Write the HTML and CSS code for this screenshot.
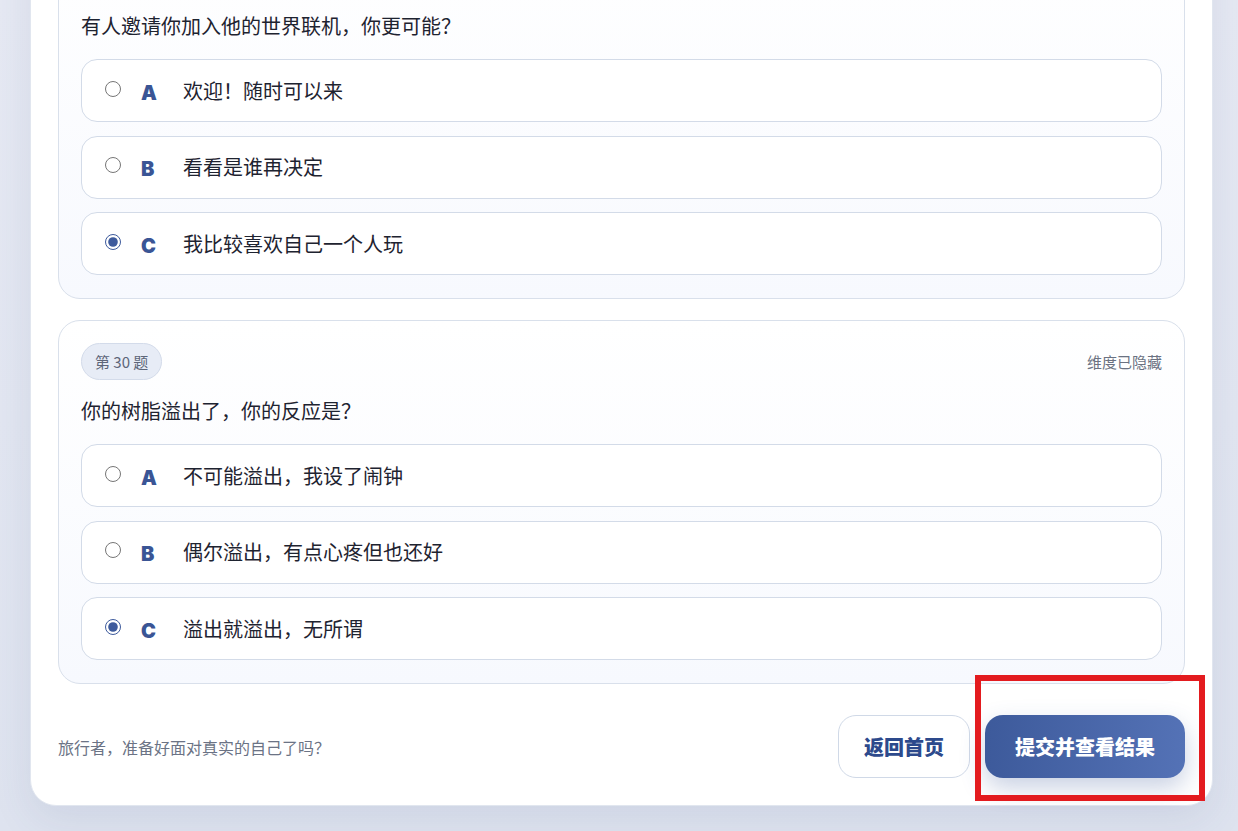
FILE: index.html
```html
<!DOCTYPE html>
<html lang="zh-CN">
<head>
<meta charset="utf-8">
<title>测验</title>
<link rel="stylesheet" href="styles.css">
</head>
<body>
<main class="panel">
  <section class="qcard qcard-cut">
    <p class="qtext">有人邀请你加入他的世界联机，你更可能？</p>
    <div class="options">
      <label class="opt"><input type="radio" name="q29"><span class="letter">A</span><span class="otext">欢迎！随时可以来</span></label>
      <label class="opt"><input type="radio" name="q29"><span class="letter">B</span><span class="otext">看看是谁再决定</span></label>
      <label class="opt"><input type="radio" name="q29" checked><span class="letter">C</span><span class="otext">我比较喜欢自己一个人玩</span></label>
    </div>
  </section>
  <section class="qcard">
    <div class="qhead">
      <span class="badge">第 30 题</span>
      <span class="dim">维度已隐藏</span>
    </div>
    <p class="qtext">你的树脂溢出了，你的反应是？</p>
    <div class="options">
      <label class="opt"><input type="radio" name="q30"><span class="letter">A</span><span class="otext">不可能溢出，我设了闹钟</span></label>
      <label class="opt"><input type="radio" name="q30"><span class="letter">B</span><span class="otext">偶尔溢出，有点心疼但也还好</span></label>
      <label class="opt"><input type="radio" name="q30" checked><span class="letter">C</span><span class="otext">溢出就溢出，无所谓</span></label>
    </div>
  </section>
  <footer class="foot">
    <p class="hint">旅行者，准备好面对真实的自己了吗？</p>
    <div class="actions">
      <button class="btn btn-ghost" type="button">返回首页</button>
      <div class="submit-wrap">
        <button class="btn btn-primary" type="button">提交并查看结果</button>
        <span class="mark"></span>
      </div>
    </div>
  </footer>
</main>
</body>
</html>
```
FILE: styles.css
```css
* { box-sizing: border-box; }
html, body { margin: 0; }
body {
  background: linear-gradient(180deg, #e6e9f3 0%, #dee3ef 100%);
  padding: 0 25px 26px 30px;
  font-family: "Noto Sans CJK SC", "Noto Sans", sans-serif;
  color: #1e2330;
  overflow: hidden;
}
.panel {
  margin-top: -93px;
  background: #fff;
  border: 1px solid #e1e6ef;
  border-radius: 26px;
  padding: 27px;
  display: flex;
  flex-direction: column;
  gap: 21px;
  box-shadow: 0 14px 40px rgba(60, 80, 130, 0.10);
}
.qcard {
  border: 1px solid #d9e0eb;
  border-radius: 22px;
  background: linear-gradient(180deg, #ffffff 0%, #f7f9fe 100%);
  padding: 22px 22px 23px;
}
.qcard-cut {
  padding-top: 75px;
}
.qhead {
  display: flex;
  justify-content: space-between;
  align-items: center;
  margin-bottom: 16px;
}
.badge {
  height: 37px;
  display: inline-flex;
  align-items: center;
  padding: 0 13px;
  border-radius: 19px;
  background: #e7ecf6;
  border: 1px solid #d3dbea;
  color: #5d6679;
  font-size: 15px;
}
.dim {
  color: #6b7282;
  font-size: 15px;
}
.qtext {
  margin: 0 0 18px;
  font-size: 20px;
  line-height: 30px;
  color: #1e2330;
}
.options {
  display: flex;
  flex-direction: column;
  gap: 13.5px;
}
.opt {
  display: flex;
  align-items: flex-start;
  background: #fff;
  border: 1px solid #d3dbe8;
  border-radius: 16px;
  padding: 18.5px 23px;
  cursor: pointer;
}
.opt input {
  width: 16px;
  height: 16px;
  margin: 2px 20px 0 0;
  accent-color: #3d5a9c;
  flex: none;
}
.letter {
  width: 42px;
  flex: none;
  font-family: "Inter", "Liberation Sans", sans-serif;
  font-weight: 900;
  font-size: 20px;
  line-height: 24px;
  padding-top: 2px;
  height: 24px;
  color: #3a5595;
}
.otext {
  font-size: 20px;
  line-height: 24px;
  color: #1e2330;
}
.foot {
  margin-top: 10px;
  display: flex;
  justify-content: space-between;
  align-items: center;
}
.hint {
  margin: 0;
  font-size: 16px;
  color: #6b7385;
}
.actions {
  display: flex;
  gap: 15px;
  align-items: center;
}
.btn {
  height: 63px;
  border-radius: 18px;
  font-family: "Noto Sans CJK SC", sans-serif;
  font-weight: 900;
  font-size: 20px;
  cursor: pointer;
}
.btn-ghost {
  background: #fff;
  border: 1px solid #d0d9e7;
  color: #2d4a8c;
  padding: 0 25px;
}
.btn-primary {
  border: none;
  color: #fff;
  padding: 0 30px;
  width: 200px;
  background: linear-gradient(90deg, #3d5a9b 0%, #5472b6 100%);
  box-shadow: 0 10px 24px rgba(61, 90, 156, 0.28);
}
.submit-wrap {
  position: relative;
}
.mark {
  position: absolute;
  left: -10px;
  top: -40px;
  right: -20px;
  bottom: -23px;
  border: 6px solid #e31b1f;
  pointer-events: none;
}
```
